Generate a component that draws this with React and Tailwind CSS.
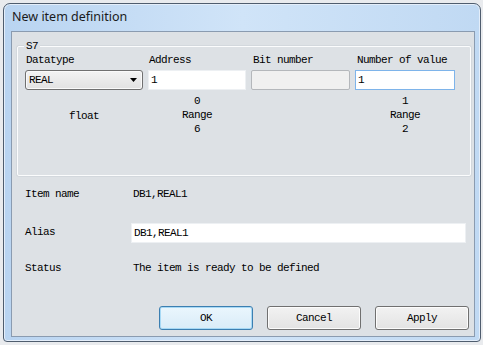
import React from "react";

const mono = { fontFamily: '"Liberation Mono", "DejaVu Sans Mono", monospace' };

function Btn({ children, primary }) {
  return (
    <div
      className={
        "w-[94px] h-[24px] rounded-[3px] border flex items-center justify-center text-[11px] tracking-[-0.6px] text-black " +
        (primary
          ? "border-[#3c7fb1] bg-gradient-to-b from-[#eaf6fd] to-[#d9ecf8] shadow-[inset_0_0_0_1px_#a7d9f5]"
          : "border-[#707070] bg-gradient-to-b from-[#f2f2f2] to-[#e3e3e3] shadow-[inset_0_0_0_1px_#fcfcfc]")
      }
    >
      {children}
    </div>
  );
}

export default function App() {
  return (
    <div className="w-[483px] h-[345px] bg-[#e9ebee] pt-[3px] pl-[3px] overflow-hidden" style={mono}>
      <div className="w-[478px] h-[339px] rounded-t-[7px] rounded-b-[4px] border border-[#4f5d6e] bg-gradient-to-r from-[#b9d4f1] via-[#d0e4f8] to-[#c0d9f3] flex flex-col shadow-[inset_0_0_0_1px_#e4eefa]">
        <div
          className="h-[27px] pl-[8px] flex items-center text-[12.5px] text-[#1a1a1a]"
          style={{ fontFamily: '"Noto Sans", "Open Sans", sans-serif' }}
        >
          New item definition
        </div>
        <div className="ml-[7px] w-[464px] h-[306px] border border-[#8a9bb0] bg-[#dde1e5] flex flex-col text-[11px] tracking-[-0.6px] text-black">
          {/* Group box */}
          <div className="relative ml-[5px] mt-[14px] w-[454px] h-[130px] border border-[#fbfcfd] rounded-[2px] shadow-[0_0_0_1px_#d3d8dd]">
            <div className="absolute left-[6px] top-[-8px] px-[2px] bg-[#dde1e5] leading-[14px]">S7</div>
            <div className="pl-[7px] pt-[7px]">
              <div className="flex gap-[5px] h-[12px] leading-[12px]">
                <div className="w-[118px] pl-[1px]">Datatype</div>
                <div className="w-[98px] pl-[1px]">Address</div>
                <div className="w-[99px] pl-[2px]">Bit number</div>
                <div className="w-[100px] pl-[2px]">Number of value</div>
              </div>
              <div className="flex gap-[5px] mt-[4px] h-[20px]">
                <div className="w-[118px] h-[20px] rounded-[3px] border border-[#707070] bg-gradient-to-b from-[#f3f3f3] to-[#e2e2e2] flex items-center pl-[3px] pr-[5px] justify-between shadow-[inset_0_0_0_1px_#fafafa]">
                  <span>REAL</span>
                  <svg width="7" height="4" viewBox="0 0 7 4">
                    <path d="M0 0 L7 0 L3.5 4 Z" fill="#000" />
                  </svg>
                </div>
                <div className="w-[98px] h-[20px] bg-white border border-[#edf0f3] flex items-center pl-[2px]">1</div>
                <div className="w-[99px] h-[20px] bg-[#f0f0f0] border border-[#b4b7bb] rounded-[2px]"></div>
                <div className="w-[100px] h-[20px] bg-white border border-[#7eb4ea] flex items-center pl-[2px]">1</div>
              </div>
              <div className="flex gap-[5px] mt-[4px] leading-[14px]">
                <div className="w-[118px] flex flex-col items-center">
                  <div>&nbsp;</div>
                  <div className="translate-y-[1px]">float</div>
                </div>
                <div className="w-[98px] flex flex-col items-center">
                  <div>0</div>
                  <div>Range</div>
                  <div>6</div>
                </div>
                <div className="w-[99px]"></div>
                <div className="w-[100px] flex flex-col items-center">
                  <div>1</div>
                  <div>Range</div>
                  <div>2</div>
                </div>
              </div>
            </div>
          </div>

          {/* Lower fields */}
          <div className="pl-[13px] mt-[8px] flex flex-col">
            <div className="flex items-center h-[20px]">
              <div className="w-[106px]">Item name</div>
              <div className="pl-[2px]">DB1,REAL1</div>
            </div>
            <div className="flex items-center h-[20px] mt-[19px]">
              <div className="w-[106px] -translate-y-[1px]">Alias</div>
              <div className="w-[335px] h-[20px] bg-white border border-[#edf0f3] flex items-center pl-[2px]">DB1,REAL1</div>
            </div>
            <div className="flex items-center h-[20px] mt-[15px]">
              <div className="w-[106px]">Status</div>
              <div className="pl-[2px]">The item is ready to be defined</div>
            </div>
          </div>

          <div className="mt-auto mb-[6px] flex justify-end pr-[5px] gap-[14px]">
            <Btn primary>OK</Btn>
            <Btn>Cancel</Btn>
            <Btn>Apply</Btn>
          </div>
        </div>
      </div>
    </div>
  );
}
